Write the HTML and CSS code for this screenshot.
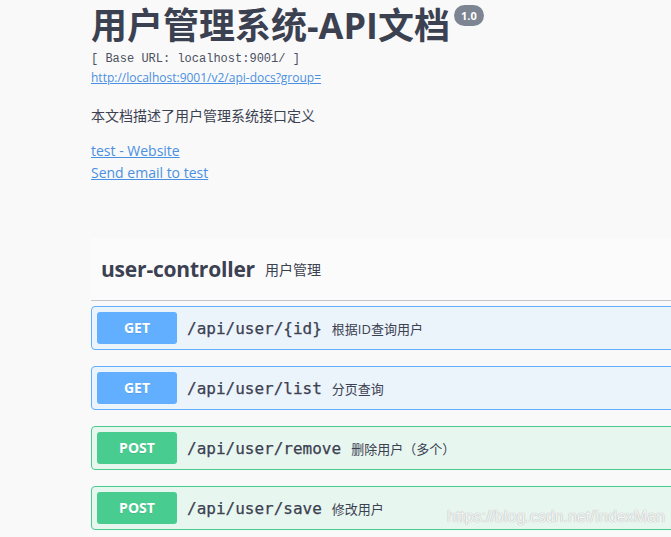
FILE: index.html
```html
<!DOCTYPE html>
<html lang="zh">
<head>
<meta charset="utf-8">
<title>用户管理系统-API文档</title>
<link rel="stylesheet" href="styles.css">
</head>
<body>
<div class="page">
  <section class="info">
    <div class="title-row">
      <h2 class="title">用户管理系统-API文档</h2>
      <span class="version">1.0</span>
    </div>
    <div class="base-url">[ Base URL: localhost:9001/ ]</div>
    <a class="url" href="#">http://localhost:9001/v2/api-docs?group=</a>
    <p class="desc">本文档描述了用户管理系统接口定义</p>
    <div class="contact">
      <a href="#">test - Website</a>
      <a href="#">Send email to test</a>
    </div>
  </section>

  <section class="tag">
    <h4 class="tag-header"><span class="tag-name">user-controller</span><small class="tag-desc">用户管理</small></h4>

    <div class="opblock get">
      <span class="method">GET</span>
      <span class="path">/api/user/{id}</span>
      <span class="summary">根据ID查询用户</span>
    </div>
    <div class="opblock get">
      <span class="method">GET</span>
      <span class="path">/api/user/list</span>
      <span class="summary">分页查询</span>
    </div>
    <div class="opblock post">
      <span class="method">POST</span>
      <span class="path">/api/user/remove</span>
      <span class="summary">删除用户（多个）</span>
    </div>
    <div class="opblock post">
      <span class="method">POST</span>
      <span class="path">/api/user/save</span>
      <span class="summary">修改用户</span>
    </div>
  </section>
</div>
<div class="watermark">https://blog.csdn.net/IndexMan</div>
</body>
</html>
```

FILE: styles.css
```css
html, body {
  margin: 0;
  padding: 0;
}
body {
  background: #f9f9f9;
  color: #3b4151;
  font-family: "Open Sans", "Noto Sans CJK SC", sans-serif;
  overflow: hidden;
  width: 671px;
  height: 537px;
  position: relative;
}
.page {
  padding-left: 91px;
  width: 600px;
}
.info {
  display: flex;
  flex-direction: column;
  align-items: flex-start;
}
.title-row {
  display: flex;
  align-items: flex-start;
  margin-top: 6px;
}
.title {
  margin: 0;
  font-size: 36px;
  line-height: 40px;
  font-weight: 700;
  color: #3b4151;
  font-family: "Open Sans", "Noto Sans CJK SC", sans-serif;
}
.version {
  margin-left: 4px;
  margin-top: -1px;
  background: #7d8492;
  color: #fff;
  font-size: 11px;
  font-weight: 700;
  line-height: 21px;
  height: 21px;
  padding: 0 7px;
  border-radius: 57px;
  font-family: "Open Sans", sans-serif;
}
.base-url {
  margin-top: 5px;
  font-family: "Liberation Mono", monospace;
  font-size: 12px;
  line-height: 16px;
  color: #4b5161;
}
.url {
  margin-top: 3px;
  font-size: 12px;
  line-height: 16px;
  color: #4990e2;
}
.desc {
  margin: 20px 0 0;
  font-size: 14px;
  line-height: 20px;
}
.contact {
  margin-top: 14px;
  display: flex;
  flex-direction: column;
}
.contact a {
  font-size: 14px;
  line-height: 22px;
  color: #4990e2;
}
.tag {
  margin-top: 54px;
}
.tag-header {
  margin: 0 0 5px;
  padding: 14px 20px 14px 10px;
  display: flex;
  align-items: center;
  border-bottom: 1px solid #c4c6cb;
  background: #fbfbfb;
  color: #3b4151;
  font-weight: 700;
}
.tag-name {
  font-size: 21px;
  line-height: 34px;
  font-weight: 700;
  letter-spacing: -0.2px;
}
.tag-desc {
  margin-left: 10px;
  font-size: 14px;
  font-weight: 400;
}
.opblock {
  display: flex;
  align-items: center;
  padding: 5px;
  margin-bottom: 16px;
  border: 1px solid;
  border-radius: 4px;
}
.opblock.get {
  border-color: #61affe;
  background: #ebf3fb;
}
.opblock.post {
  border-color: #49cc90;
  background: #e8f6f0;
}
.method {
  width: 80px;
  height: 32px;
  line-height: 32px;
  text-align: center;
  color: #fff;
  font-size: 14px;
  font-weight: 700;
  border-radius: 3px;
  text-shadow: 0 1px 0 rgba(0, 0, 0, 0.1);
}
.get .method { background: #61affe; }
.post .method { background: #49cc90; }
.path {
  padding: 0 10px;
  font-family: "DejaVu Sans Mono", monospace;
  font-size: 16px;
  color: #3b4151;
  -webkit-text-stroke: 0.25px #3b4151;
}
.summary {
  font-size: 13px;
  color: #3b4151;
}
.watermark {
  position: absolute;
  left: 447px;
  top: 508px;
  font-family: "Liberation Sans", sans-serif;
  font-size: 16px;
  color: rgba(255, 255, 255, 0.85);
  text-shadow: 0 0 1px #b8b8b8, 0 0 1px #b8b8b8;
}
```
